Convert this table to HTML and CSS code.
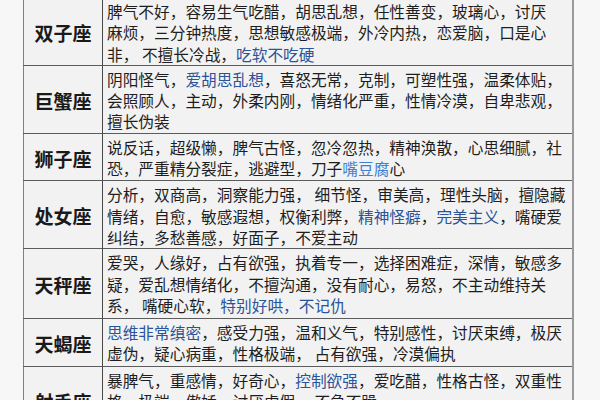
FILE: index.html
```html
<!DOCTYPE html>
<html lang="zh-CN">
<head>
<meta charset="utf-8">
<title>星座性格</title>
<link rel="stylesheet" href="styles.css">
</head>
<body>
<table class="signs">
  <tr class="row">
    <th class="sign">双子座</th>
    <td class="traits">脾气不好，容易生气吃醋，胡思乱想，任性善变，玻璃心，讨厌<br>麻烦，三分钟热度，思想敏感极端，外冷内热，恋爱脑，口是心<br>非，&nbsp;不擅长冷战，<span class="hl">吃软不吃硬</span></td>
  </tr>
  <tr class="row">
    <th class="sign">巨蟹座</th>
    <td class="traits">阴阳怪气，<span class="hl">爱胡思乱想</span>，喜怒无常，克制，可塑性强，温柔体贴，<br>会照顾人，主动，外柔内刚，情绪化严重，性情冷漠，自卑悲观，<br>擅长伪装</td>
  </tr>
  <tr class="row row--short">
    <th class="sign">狮子座</th>
    <td class="traits">说反话，超级懒，脾气古怪，忽冷忽热，精神涣散，心思细腻，社<br>恐，严重精分裂症，逃避型，刀子<span class="hl hl--bright">嘴豆腐</span>心</td>
  </tr>
  <tr class="row">
    <th class="sign">处女座</th>
    <td class="traits">分析，双商高，洞察能力强，&nbsp;细节怪，审美高，理性头脑，擅隐藏<br>情绪，自愈，敏感遐想，权衡利弊，<span class="hl">精神怪癖</span>，<span class="hl">完美主义</span>，嘴硬爱<br>纠结，多愁善感，好面子，不爱主动</td>
  </tr>
  <tr class="row row--loose">
    <th class="sign">天秤座</th>
    <td class="traits">爱哭，人缘好，占有欲强，执着专一，选择困难症，深情，敏感多<br>疑，爱乱想情绪化，不擅沟通，没有耐心，易怒，不主动维持关<br>系，&nbsp;嘴硬心软，<span class="hl">特别好哄，不记仇</span></td>
  </tr>
  <tr class="row row--short">
    <th class="sign">天蝎座</th>
    <td class="traits"><span class="hl">思维非常缜密</span>，感受力强，温和义气，特别感性，讨厌束缚，极厌<br>虚伪，疑心病重，性格极端，&nbsp;占有欲强，冷漠偏执</td>
  </tr>
  <tr class="row">
    <th class="sign">射手座</th>
    <td class="traits">暴脾气，重感情，好奇心，<span class="hl">控制欲强</span>，爱吃醋，性格古怪，双重性<br>格，极端，傲娇，讨厌虚假，&nbsp;不急不躁<br>&nbsp;</td>
  </tr>
</table>
</body>
</html>
```

FILE: styles.css
```css
html, body {
  margin: 0;
  padding: 0;
}

body {
  background: #f7f7f7;
  font-family: "Noto Sans CJK SC", "Noto Sans", sans-serif;
  color: #1e1e1e;
  overflow: hidden;
}

.signs {
  border-collapse: collapse;
  margin: -2px 0 0 23px;
  width: 551px;
  background: #f2f2f2;
  border-left: 1px solid #808080;
  border-right: 2px solid #9a9a9a;
}

.row {
  border-bottom: 1px solid #5c5c5c;
}

.sign {
  width: 78px;
  padding: 2px 0 0;
  border-right: 1px solid #4a4a4a;
  font-size: 19px;
  font-weight: bold;
  text-align: center;
  vertical-align: middle;
  color: #1a1a1a;
}

.traits {
  padding: 3px 0 0 4px;
  font-size: 15.7px;
  line-height: 21.3px;
  white-space: nowrap;
  vertical-align: top;
}

.row--short .traits {
  padding-bottom: 1px;
}

.row--loose .traits {
  padding-bottom: 2px;
}

.hl {
  color: #2a5398;
}

.hl--bright {
  color: #3f80d4;
}
```
